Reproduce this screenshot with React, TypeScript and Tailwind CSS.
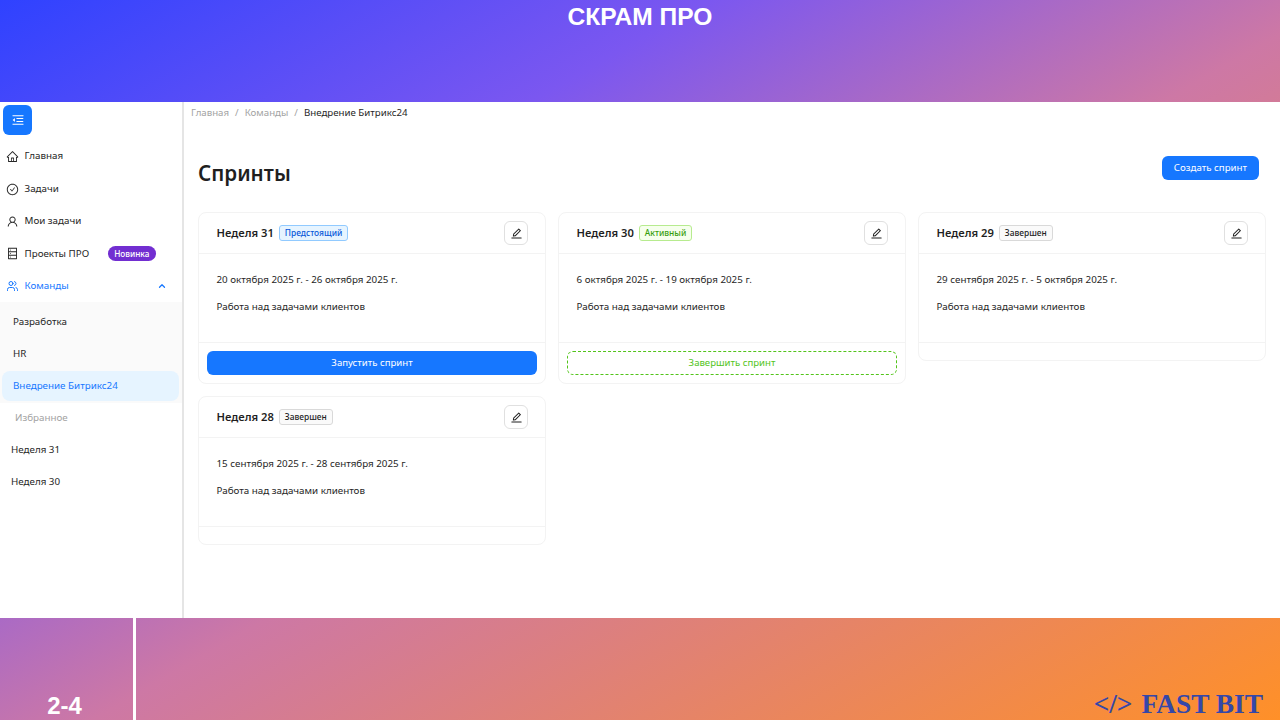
import { AiOutlineHome, AiOutlineCheckCircle, AiOutlineUser, AiOutlineDatabase, AiOutlineMenuFold, AiOutlineEdit } from "react-icons/ai"
import { ChevronUp, Users } from "lucide-react"

interface Sprint {
  name: string
  status: string
  statusClass: string
  dates: string
  action?: "start" | "finish"
}

const sprints: Sprint[] = [
  { name: "Неделя 31", status: "Предстоящий", statusClass: "bg-[#e6f4ff] border-[#91caff] text-[#0958d9]", dates: "20 октября 2025 г. - 26 октября 2025 г.", action: "start" },
  { name: "Неделя 30", status: "Активный", statusClass: "bg-[#f6ffed] border-[#b7eb8f] text-[#389e0d]", dates: "6 октября 2025 г. - 19 октября 2025 г.", action: "finish" },
  { name: "Неделя 29", status: "Завершен", statusClass: "bg-[#fafafa] border-[#d9d9d9] text-[#1f1f1f]", dates: "29 сентября 2025 г. - 5 октября 2025 г." },
  { name: "Неделя 28", status: "Завершен", statusClass: "bg-[#fafafa] border-[#d9d9d9] text-[#1f1f1f]", dates: "15 сентября 2025 г. - 28 сентября 2025 г." },
]

function SprintCard({ sprint }: { sprint: Sprint }) {
  return (
    <div className="rounded-lg border border-[#f3f3f3] bg-white">
      <div className="flex h-[41px] items-center justify-between border-b border-[#f3f3f3] pl-[17.5px] pr-[17px]">
        <div className="mt-[1px] flex items-center gap-[5px]">
          <span className="text-[11.2px] font-semibold text-[#1f1f1f]">{sprint.name}</span>
          <span className={`rounded-[3px] border px-[5px] text-[8.4px] font-medium leading-[14px] ${sprint.statusClass}`}>{sprint.status}</span>
        </div>
        <button className="flex h-6 w-6 items-center justify-center rounded-md border border-[#e0e0e0] bg-white">
          <AiOutlineEdit className="h-[13px] w-[13px] text-[#1f1f1f]" />
        </button>
      </div>
      <div className="h-[88px] px-[17.5px] pt-[19px] text-[9.8px] text-[#262626]">
        <p className="leading-[14px]">{sprint.dates}</p>
        <p className="mt-[13px] leading-[14px]">Работа над задачами клиентов</p>
      </div>
      <div className="border-t border-[#f3f3f3] p-2 empty:h-[18px] empty:p-0">
        {sprint.action === "start" && (
          <button className="block h-6 w-full rounded-md bg-[#1677ff] text-[9.6px] text-white">Запустить спринт</button>
        )}
        {sprint.action === "finish" && (
          <button className="block h-6 w-full rounded-md border border-dashed border-[#52c41a] text-[9.6px] text-[#52c41a]">Завершить спринт</button>
        )}
      </div>
    </div>
  )
}

function Sidebar() {
  return (
    <aside className="flex w-[184px] shrink-0 flex-col border-r-2 border-[#e5e5e5] text-[9.8px] text-[#262626]">
      <div className="pl-[3px] pt-[3px]">
        <button className="flex h-[30px] w-[29px] items-center justify-center rounded-md bg-[#1677ff]">
          <AiOutlineMenuFold className="h-[14px] w-[14px] text-white" />
        </button>
      </div>
      <div className="mt-[5.5px] flex flex-col">
        <div className="flex h-[32.4px] items-center gap-[5.5px] pl-[6px]"><AiOutlineHome className="h-[13px] w-[13px]" />Главная</div>
        <div className="flex h-[32.4px] items-center gap-[5.5px] pl-[6px]"><AiOutlineCheckCircle className="h-[13px] w-[13px]" />Задачи</div>
        <div className="flex h-[32.4px] items-center gap-[5.5px] pl-[6px]"><AiOutlineUser className="h-[13px] w-[13px]" />Мои задачи</div>
        <div className="flex h-[32.4px] items-center gap-[5.5px] pl-[6px]">
          <AiOutlineDatabase className="h-[13px] w-[13px]" />Проекты ПРО
          <span className="ml-[13px] rounded-full bg-[#722ed1] px-[6.5px] text-[8.2px] font-medium leading-[15px] text-white">Новинка</span>
        </div>
        <div className="flex h-[32.4px] items-center gap-[5.5px] pl-[6px] pr-[15px] text-[#1677ff]">
          <Users className="h-[12px] w-[13px]" />Команды
          <ChevronUp strokeWidth={3} className="ml-auto h-[10px] w-[10px]" />
        </div>
      </div>
      <div className="bg-[#fafafa] py-[2px] pt-[2.5px]">
        <div className="flex h-[32px] items-center pl-[13px] pt-[2px]">Разработка</div>
        <div className="flex h-[32px] items-center pl-[13px] pt-[2px]">HR</div>
        <div className="ml-[2px] mr-[3px] mt-[2px] flex h-[30px] items-center rounded-lg bg-[#e6f4ff] pl-[11px] text-[#1677ff]">Внедрение Битрикс24</div>
      </div>
      <div className="mb-[2px] flex h-[28px] items-center pl-[15px] pt-[2px] text-[#a3a3a3]">Избранное</div>
      <div className="flex h-[32px] items-center pl-[11px] pt-[2px]">Неделя 31</div>
      <div className="flex h-[32px] items-center pl-[11px] pt-[2px]">Неделя 30</div>
    </aside>
  )
}

export default function App() {
  return (
    <div className="flex h-[720px] w-[1280px] flex-col overflow-hidden bg-[linear-gradient(150deg,#2f42ff_0%,#7b57f0_28%,#cd78a5_53%,#ff9028_100%)] font-['Noto_Sans',sans-serif]">
      <header className="flex h-[102px] shrink-0 justify-center pt-[3px] font-['Liberation_Sans',sans-serif] text-[24.6px] font-bold leading-[28px] text-white">
        СКРАМ ПРО
      </header>
      <div className="flex h-[516px] shrink-0 bg-white">
        <Sidebar />
        <main className="flex-1">
          <nav className="flex h-[23px] items-center gap-[6px] pl-[7px] text-[9.7px] text-[#a3a3a3]">
            <span>Главная</span>
            <span>/</span>
            <span>Команды</span>
            <span>/</span>
            <span className="text-[#262626]">Внедрение Битрикс24</span>
          </nav>
          <div className="flex h-[87px] items-center justify-between pl-[14px] pr-[21px]">
            <h1 className="mt-[10px] text-[20.6px] font-semibold text-[#1f1f1f]">Спринты</h1>
            <button className="-mt-[1px] h-6 rounded-md bg-[#1677ff] px-3 text-[9.7px] text-white">Создать спринт</button>
          </div>
          <div className="grid grid-cols-3 items-start gap-3 px-[14px]">
            {sprints.map((s) => (
              <SprintCard key={s.name} sprint={s} />
            ))}
          </div>
        </main>
      </div>
      <footer className="flex h-[102px] shrink-0">
        <div className="flex w-[133px] items-end justify-center pr-[4px] font-['Liberation_Sans',sans-serif] text-[24px] font-bold leading-[28px] text-white">2-4</div>
        <div className="w-[3px] bg-white" />
        <div className="flex flex-1 items-end justify-end pr-[17px] font-['Liberation_Serif',serif] text-[27.4px] font-bold leading-[31px] text-[#3547a8]">
          <span className="mr-[9px]">&lt;/&gt;</span>FAST BIT
        </div>
      </footer>
    </div>
  )
}
